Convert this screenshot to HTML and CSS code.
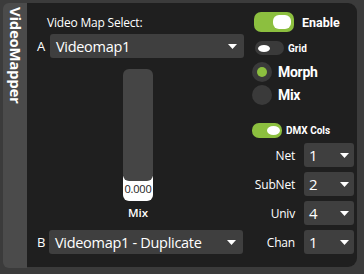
FILE: index.html
```html
<!DOCTYPE html>
<html>
<head>
<meta charset="utf-8">
<link rel="stylesheet" href="styles.css">
</head>
<body>
<div class="app">
  <div class="tab"><span class="tab-label">VideoMapper</span></div>
  <div class="panel">
    <div class="left">
      <div class="title">Video Map Select:</div>
      <div class="map-row">
        <span class="letter">A</span>
        <div class="select big"><span>Videomap1</span><svg class="caret" width="9" height="5" viewBox="0 0 9 5"><polygon points="0,0 9,0 4.5,5" fill="#fff"/></svg></div>
      </div>
      <div class="slider">
        <div class="track"></div>
        <div class="handle">0.000</div>
      </div>
      <div class="mix-label">Mix</div>
      <div class="map-row row-b">
        <span class="letter">B</span>
        <div class="select big"><span>Videomap1 - Duplicate</span><svg class="caret" width="9" height="5" viewBox="0 0 9 5"><polygon points="0,0 9,0 4.5,5" fill="#fff"/></svg></div>
      </div>
    </div>
    <div class="right">
      <div class="opt enable-row">
        <div class="toggle on big-toggle"><div class="knob"></div></div>
        <span class="lbl lbl-md">Enable</span>
      </div>
      <div class="opt grid-row">
        <div class="toggle off small-toggle"><div class="knob"></div></div>
        <span class="lbl lbl-sm">Grid</span>
      </div>
      <div class="opt radio-row morph-row">
        <div class="radio checked"><div class="dot"></div></div>
        <span class="lbl lbl-lg">Morph</span>
      </div>
      <div class="opt radio-row mix-row">
        <div class="radio"></div>
        <span class="lbl lbl-lg">Mix</span>
      </div>
      <div class="opt dmx-row">
        <div class="toggle on dmx-toggle"><div class="knob"></div></div>
        <span class="lbl lbl-sm">DMX Cols</span>
      </div>
      <div class="fields">
        <div class="field"><span class="field-lbl">Net</span><div class="select small"><span>1</span><svg class="caret" width="9" height="5" viewBox="0 0 9 5"><polygon points="0,0 9,0 4.5,5" fill="#fff"/></svg></div></div>
        <div class="field"><span class="field-lbl">SubNet</span><div class="select small"><span>2</span><svg class="caret" width="9" height="5" viewBox="0 0 9 5"><polygon points="0,0 9,0 4.5,5" fill="#fff"/></svg></div></div>
        <div class="field"><span class="field-lbl">Univ</span><div class="select small"><span>4</span><svg class="caret" width="9" height="5" viewBox="0 0 9 5"><polygon points="0,0 9,0 4.5,5" fill="#fff"/></svg></div></div>
        <div class="field"><span class="field-lbl">Chan</span><div class="select small"><span>1</span><svg class="caret" width="9" height="5" viewBox="0 0 9 5"><polygon points="0,0 9,0 4.5,5" fill="#fff"/></svg></div></div>
      </div>
    </div>
  </div>
</div>
<div class="bottom-line"></div>
</body>
</html>
```

FILE: styles.css
```css
* { box-sizing: border-box; margin: 0; padding: 0; }
html, body { width: 364px; height: 274px; overflow: hidden; }
body {
  background: #3b3b3b;
  font-family: "Open Sans", "Noto Sans", sans-serif;
  color: #fff;
  display: flex;
  flex-direction: column;
}
.app { display: flex; padding: 3px 0 0 3px; height: 268px; }
.tab {
  width: 24px;
  height: 265px;
  background: #4b4b4b;
  border-radius: 6px 0 0 6px;
  display: flex;
  justify-content: center;
  padding-top: 4px;
}
.tab-label {
  writing-mode: vertical-rl;
  font-weight: 700;
  font-size: 15px;
  line-height: 15px;
  letter-spacing: -0.3px;
}
.panel {
  width: 330px;
  height: 264px;
  background: #1f1f1f;
  border-radius: 0 9px 9px 0;
  display: flex;
}
.left {
  width: 223px;
  padding: 12px 6px 0 10px;
  display: flex;
  flex-direction: column;
}
.title { font-size: 12px; line-height: 16px; padding-left: 10px; letter-spacing: -0.2px; }
.map-row { display: flex; align-items: center; margin-top: 3px; height: 24px; }
.letter { width: 13px; font-size: 13px; line-height: 16px; }
.select {
  background: #3f3f3f;
  border-radius: 3px;
  display: flex;
  align-items: center;
  justify-content: space-between;
}
.select.big {
  width: 194px;
  height: 24px;
  padding: 0 7px 0 6px;
  font-size: 14.5px;
  letter-spacing: -0.3px;
}
.slider {
  position: relative;
  width: 30px;
  height: 132px;
  margin: 11px 0 0 86px;
}
.track {
  position: absolute;
  left: 0; top: 0;
  width: 30px; height: 112px;
  background: #454545;
  border-radius: 6px;
  z-index: 1;
}
.handle {
  position: absolute;
  left: 0; bottom: 0;
  width: 30px; height: 25px;
  background: #fff;
  border-radius: 0 0 6px 6px;
  color: #222;
  font-size: 11px;
  line-height: 14px;
  text-align: center;
  padding-top: 6px;
  letter-spacing: -0.2px;
}
.mix-label {
  width: 30px;
  margin-left: 86px;
  text-align: center;
  font-size: 11.5px;
  font-weight: 600;
  line-height: 16px;
  margin-top: 4px;
}
.row-b { margin-top: 9px; }
.row-b .select.big { margin-left: -1px; }

.right { flex: 1; padding: 6px 3px 0 2px; display: flex; flex-direction: column; }
.opt { display: flex; align-items: center; }
.lbl { font-family: Roboto, "Open Sans", sans-serif; font-weight: 700; }
.lbl-md { font-size: 12.5px; margin-left: 8px; }
.lbl-sm { font-size: 10px; }
.lbl-lg { font-size: 14px; margin-left: 6px; letter-spacing: -0.3px; }
.toggle { display: flex; align-items: center; }
.toggle.on { background: #8cbf3f; justify-content: flex-end; }
.toggle.off { background: #3a3a3a; justify-content: flex-start; }
.knob { background: #fff; }
.enable-row { height: 20px; margin-top: 3px; padding-left: 2px; }
.big-toggle { width: 40px; height: 20px; border-radius: 7px; padding: 0 3px; }
.big-toggle .knob { width: 18px; height: 14px; border-radius: 6px; }
.grid-row { height: 14px; margin-top: 9px; padding-left: 3px; }
.small-toggle { width: 29px; height: 14px; border-radius: 7px; padding-left: 3px; }
.small-toggle .knob { width: 12px; height: 7px; border-radius: 50%; }
.grid-row .lbl-sm { margin-left: 4px; }
.radio-row { height: 20px; }
.morph-row { margin-top: 7px; }
.mix-row { margin-top: 3px; }
.radio {
  width: 20px; height: 20px; border-radius: 50%;
  background: #3a3a3a;
  display: flex; align-items: center; justify-content: center;
}
.radio .dot { width: 10px; height: 10px; border-radius: 50%; background: #8cbf3f; }
.dmx-row { height: 15px; margin-top: 18px; }
.dmx-toggle { width: 30px; height: 15px; border-radius: 7px; padding-right: 2px; }
.dmx-toggle .knob { width: 13px; height: 9px; border-radius: 50%; }
.dmx-row .lbl-sm { margin-left: 4px; }
.fields { display: flex; flex-direction: column; gap: 5px; margin-top: 5px; }
.field { display: flex; align-items: center; justify-content: flex-end; gap: 9px; height: 24px; }
.field-lbl { font-size: 12px; letter-spacing: -0.2px; }
.select.small { width: 50px; height: 24px; padding: 0 5px 0 5px; font-size: 15px; }
```
